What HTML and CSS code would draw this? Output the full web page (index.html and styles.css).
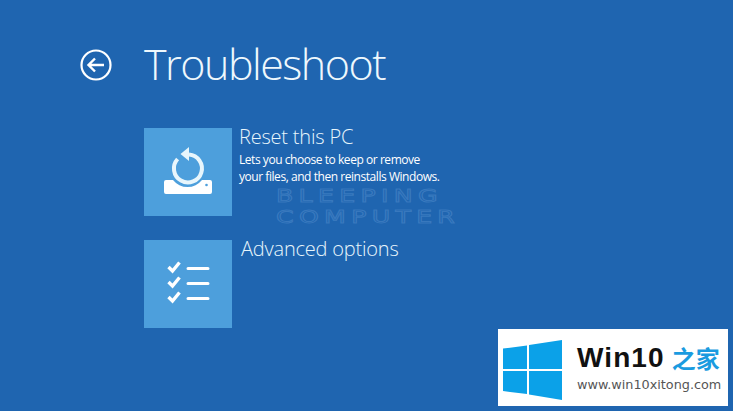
FILE: index.html
```html
<!DOCTYPE html>
<html lang="en">
<head>
<meta charset="utf-8">
<title>Troubleshoot</title>
<link rel="stylesheet" href="styles.css">
</head>
<body>
<div class="wrap">
	<header class="top">
		<a href="" class="back">
			<svg width="32" height="32" viewBox="0 0 32 32">
				<circle cx="16" cy="16" r="14.5" fill="none" stroke="#fff" stroke-width="2.2"/>
				<path d="M24 16H9M15 9.5L8.5 16L15 22.5" fill="none" stroke="#fff" stroke-width="2.4"/>
			</svg>
		</a>
		<h1>Troubleshoot</h1>
	</header>
	<ul class="options">
		<li>
			<a href="" class="tile">
				<svg width="88" height="88" viewBox="0 0 88 88">
					<path d="M45 26.500A14 14 0 1 1 33.600 31" fill="none" stroke="#e8f6fc" stroke-width="4"/>
					<path d="M45 19V33L36.500 26Z" fill="#e8f6fc"/>
					<path d="M22 52H29A18.500 18.500 0 0 0 58 52H66Q68 52 68 54V64Q68 66 66 66H22Q20 66 20 64V54Q20 52 22 52Z" fill="#fff"/>
					<circle cx="62.500" cy="57" r="1.300" fill="#4d9fdc"/>
				</svg>
			</a>
			<div class="info">
				<h2>Reset this PC</h2>
				<p>Lets you choose to keep or remove<br>your files, and then reinstalls Windows.</p>
			</div>
		</li>
		<li>
			<a href="" class="tile">
				<svg width="88" height="88" viewBox="0 0 88 88">
					<g fill="none" stroke="#fff">
						<path d="M24.500 27L28.500 31L35.500 22.500M24.500 42L28.500 46L35.500 37.500M24.500 57L28.500 61L35.500 52.500" stroke-width="3.400"/>
						<path d="M44 28.500H64M44 43.500H64M44 58.500H64" stroke-width="3" stroke-linecap="round"/>
					</g>
				</svg>
			</a>
			<div class="info second">
				<h2>Advanced options</h2>
			</div>
		</li>
	</ul>
	<div class="mark">BLEEPING<br>COMPUTER</div>
	<div class="logo">
		<svg width="59" height="60" viewBox="0 0 59 60">
			<path d="M0 8.500L24 5.500V29H0ZM26 5L59 0V29H26ZM0 31H24V54L0 51ZM26 31H59V60L26 54.500Z" fill="#0ba1e8"/>
		</svg>
		<div class="logo-text">
			<div class="logo-name">Win10<span>之家</span></div>
			<div class="logo-url">www.win10xitong.com</div>
		</div>
	</div>
</div>
</body>
</html>
```

FILE: styles.css
```css
* {margin:0; padding:0}
html, body {height:100%; overflow:hidden}
body {background-color:#1f65b0; color:#fff; font-family:"Open Sans", "Liberation Sans", sans-serif}
li {list-style:none}
a {color:#fff; text-decoration:none}

.wrap {position:relative; width:733px; height:411px; padding-left:80px; box-sizing:border-box}

.top {display:flex; align-items:center; height:60px; padding:35px 0 33px}
.back {display:block; width:32px; height:32px; margin-right:32px}
.top h1 {font-size:43px; font-weight:300; line-height:60px; letter-spacing:-1.5px; color:#eef8fd; margin-bottom:3px}

.options {margin-left:64px; display:flex; flex-direction:column; gap:24px}
.options li {display:flex; align-items:flex-start}
.tile {display:block; width:88px; height:88px; background-color:#4d9fdc}
.tile svg {display:block}
.info {margin-left:7px}
.info h2 {font-size:20px; font-weight:300; line-height:18px; margin-bottom:6px; color:#e8f6fc; letter-spacing:-0.2px}
.info p {font-size:12px; line-height:16.500px; letter-spacing:-0.45px}
.second {margin-left:9px}

.mark {position:absolute; left:276px; top:185px; font-family:"DejaVu Sans", sans-serif; font-size:18px; line-height:21px; letter-spacing:3.800px; color:transparent; -webkit-text-stroke:1px rgba(120,170,225,0.3); white-space:nowrap; transform:scaleX(1.4); transform-origin:left top}

.logo {position:absolute; left:498px; top:329px; width:230px; height:77px; background-color:#fff; display:flex; align-items:center; box-sizing:border-box; padding:4px 0 0 5px}
.logo svg {display:block; flex:none}
.logo-text {margin-left:15px; margin-top:-4px}
.logo-name {display:flex; align-items:center; font-family:"Liberation Sans", sans-serif; font-size:28px; font-weight:bold; line-height:32px; letter-spacing:1.100px; color:#111; white-space:nowrap}
.logo-name span {margin-left:7px; font-family:"Noto Sans CJK SC", sans-serif; font-size:24px; line-height:32px; letter-spacing:0; color:#1a9be0}
.logo-url {margin-top:2px; font-family:"DejaVu Sans", sans-serif; font-size:12.800px; line-height:17px; color:#555; white-space:nowrap}
```
